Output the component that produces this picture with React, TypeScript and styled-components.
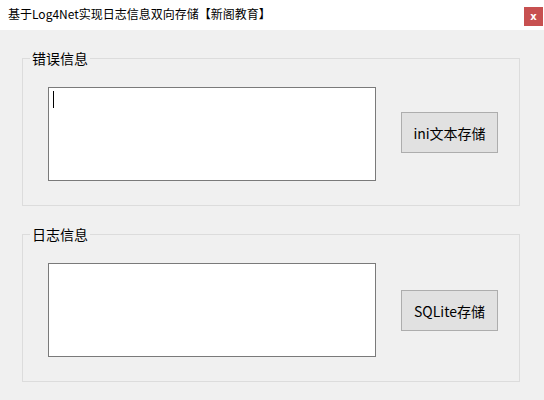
import React from "react";
import styled, { createGlobalStyle } from "styled-components";

const Global = createGlobalStyle`
  html, body { margin: 0; padding: 0; background: #f0f0f0; }
  body { font-family: "Noto Sans CJK SC", "Noto Sans", sans-serif; color: #000; }
  * { box-sizing: border-box; }
`;

const Window = styled.div`
  width: 544px;
  height: 400px;
  background: #f0f0f0;
  display: flex;
  flex-direction: column;
  overflow: hidden;
`;

const TitleBar = styled.div`
  height: 30px;
  background: #fff;
  display: flex;
  align-items: flex-start;
  justify-content: space-between;
  padding-left: 8px;
  padding-right: 1px;
`;

const Title = styled.div`
  font-size: 12px;
  line-height: 30px;
  margin-top: -1px;
  white-space: nowrap;
`;

const CloseButton = styled.div`
  margin-top: 7px;
  width: 19px;
  height: 19px;
  background: #c75050;
  color: #fff;
  font-family: "DejaVu Sans", sans-serif;
  font-size: 10px;
  font-weight: bold;
  display: flex;
  align-items: center;
  justify-content: center;
  line-height: 1;
`;

const Body = styled.div`
  display: flex;
  flex-direction: column;
  gap: 19px;
  padding: 19px 0 0 22px;
`;

const Group = styled.fieldset`
  margin: 0;
  width: 498px;
  height: 157px;
  border: 1px solid #dcdcdc;
  padding: 0 0 0 25px;
  min-width: 0;
`;

const Legend = styled.legend`
  margin-left: -18px;
  padding: 0 2px;
  font-size: 14px;
  line-height: 18px;
`;

const Row = styled.div`
  display: flex;
  align-items: flex-start;
  gap: 25px;
  padding-top: 20px;
`;

const EditorWrap = styled.div`
  position: relative;
  width: 328px;
  height: 94px;
`;

const Editor = styled.textarea`
  display: block;
  width: 328px;
  height: 94px;
  border: 1px solid #7a7a7a;
  background: #fff;
  resize: none;
  outline: none;
  margin: 0;
  padding: 3px 4px;
  font-family: "Noto Sans CJK SC", sans-serif;
  font-size: 14px;
`;

const Caret = styled.span`
  position: absolute;
  left: 5px;
  top: 4px;
  width: 1px;
  height: 17px;
  background: #000;
`;

const ActionButton = styled.button<{ $offset: number }>`
  margin-top: ${(p) => p.$offset}px;
  width: 97px;
  height: 41px;
  background: #e1e1e1;
  border: 1px solid #adadad;
  font-family: "Noto Sans CJK SC", "Noto Sans", sans-serif;
  font-size: 14px;
  color: #000;
  padding: 0;
  display: flex;
  align-items: center;
  justify-content: center;
`;

export default function App() {
  return (
    <>
      <Global />
      <Window>
        <TitleBar>
          <Title>基于Log4Net实现日志信息双向存储【新阁教育】</Title>
          <CloseButton>x</CloseButton>
        </TitleBar>
        <Body>
          <Group>
            <Legend>错误信息</Legend>
            <Row>
              <EditorWrap>
                <Editor readOnly />
                <Caret />
              </EditorWrap>
              <ActionButton $offset={25}>ini文本存储</ActionButton>
            </Row>
          </Group>
          <Group>
            <Legend>日志信息</Legend>
            <Row>
              <EditorWrap>
                <Editor readOnly />
              </EditorWrap>
              <ActionButton $offset={27}>SQLite存储</ActionButton>
            </Row>
          </Group>
        </Body>
      </Window>
    </>
  );
}
